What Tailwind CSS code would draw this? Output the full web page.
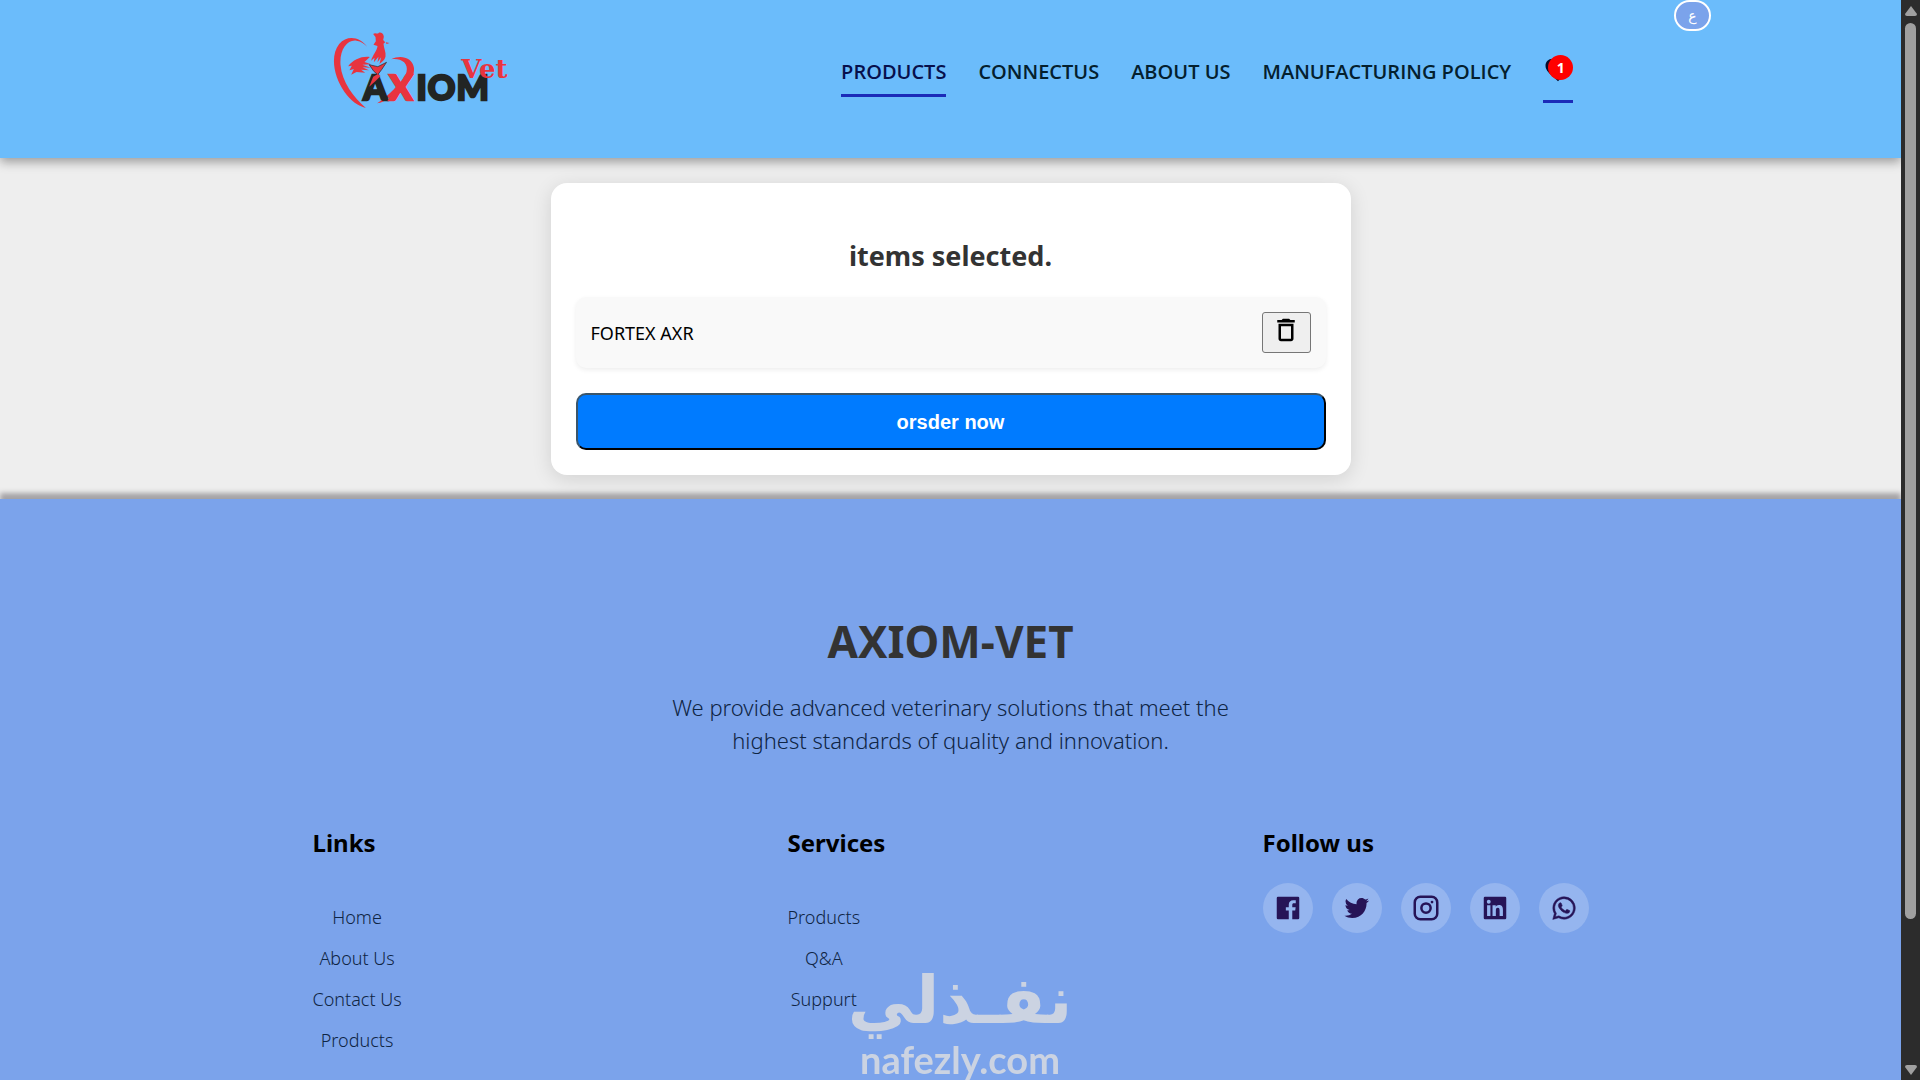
<!DOCTYPE html>
<html lang="en">
<head>
  <meta charset="UTF-8" />
  <meta name="viewport" content="width=device-width, initial-scale=1.0" />
  <title>AXIOM-VET</title>
  <script src="https://cdn.jsdelivr.net/npm/@tailwindcss/browser@4"></script>
</head>
<body class="bg-[#eeeeee] font-['Noto_Sans',sans-serif] text-black min-h-screen flex flex-col pr-[19px]">

  <!-- header -->
  <header class="relative z-10 h-[158px] bg-[#6bbcfb] shadow-[0_4px_10px_rgba(0,0,0,0.35)]">
    <div class="w-2/3 mx-auto pt-[30px] pl-4 pr-[11px] flex items-start justify-between">
      <a href="#" aria-label="Axiom Vet home">
        <svg class="w-[177px] h-[80px]" viewBox="70 30 530 240">
          <g fill="#e8343f">
            <path d="M172 80C150 50 112 44 88 72C60 108 72 170 104 216C122 242 144 258 168 264C132 232 96 186 92 134C89 88 112 58 140 62C154 64 164 72 172 80Z" />
            <path d="M244 118C272 104 306 112 312 142C318 176 282 196 262 212C244 228 226 246 202 250C232 230 282 184 290 156C297 128 272 114 244 118Z" />
            <path d="M190 42C197 36 202 44 207 38C213 36 221 40 222 50L220 60L226 67L221 71C222 84 229 96 227 110C224 121 216 126 209 132L214 112L203 127L206 110L192 127L194 113L184 122C188 105 202 92 203 78L191 74L198 64L197 51Z" />
            <path d="M228 67L239 69L230 72Z" />
            <path d="M180 111C156 108 130 118 115 139L126 137L119 151L132 147L124 164L140 156L166 158L154 149L177 151L158 142L182 143L158 134L184 133L164 126Z" />
          </g>
          <g font-family="Lato, sans-serif" font-weight="900" font-size="102" fill="#222524" stroke="#222524" stroke-width="7">
            <text x="160" y="240">A</text>
            <text x="238" y="240" fill="#e8343f" stroke="#e8343f">X</text>
            <text x="320" y="240">I</text>
            <text x="354" y="240">O</text>
            <text x="440" y="240">M</text>
          </g>
          <path d="M178 134L204 140L230 127L216 148L204 164L192 154Z" fill="#e8343f" stroke="#222" stroke-width="2" />
          <path d="M178 200L190 170L204 162L212 168L198 182Z" fill="#e8343f" />
          <text x="454" y="174" font-family="'DejaVu Serif', serif" font-weight="700" font-size="78" fill="#e8343f">Vet</text>
        </svg>
      </a>
      <nav class="flex items-start gap-8 pt-[25px] font-['Open_Sans',sans-serif] font-semibold text-xl leading-[34px] text-[#04202e]">
        <a href="#" class="border-b-3 border-[#1c2bb8] pb-[5px] text-[#07104c]">PRODUCTS</a>
        <a href="#">CONNECTUS</a>
        <a href="#">ABOUT US</a>
        <a href="#">MANUFACTURING POLICY</a>
        <a href="#" aria-label="Favourites" class="relative w-[30px] h-12 border-b-3 border-[#1c2bb8]">
          <svg class="w-[30px] h-[30px]" viewBox="0 0 24 24" fill="#080b2b"><path d="M12 21 10.550 19.500C5.400 14.900 2 12.300 2 8.500 2 5.400 4.400 3 7.500 3c1.700 0 3.400.8 4.500 2.100C13.100 3.800 14.800 3 16.500 3 19.600 3 22 5.400 22 8.500c0 3.800-3.400 6.400-8.600 11z" /></svg>
          <span class="absolute right-0 top-0 w-[25px] h-[25px] rounded-full bg-[#ff0000] text-white text-sm font-bold leading-[25px] text-center">1</span>
        </a>
      </nav>
    </div>
    <button type="button" class="absolute top-0 right-[10%] w-[37px] h-[31px] rounded-full border-2 border-white bg-[#7ba3eb] text-white font-['DejaVu_Sans',sans-serif] text-sm">ع</button>
  </header>

  <!-- selected items -->
  <main class="px-4 py-[25px] pb-6">
    <section class="max-w-[800px] mx-auto bg-white rounded-2xl p-[25px] pt-[52px] shadow-[0_4px_20px_rgba(0,0,0,0.12)]">
      <h1 class="text-[27px] leading-[42px] font-bold text-[#333] text-center">items selected.</h1>
      <ul class="mt-5">
        <li class="flex items-center justify-between rounded-[10px] bg-[#f9f9f9] p-[15px] shadow-[0_2px_5px_rgba(0,0,0,0.07)]">
          <span class="text-lg">FORTEX AXR</span>
          <button type="button" aria-label="Remove FORTEX AXR" class="w-[49px] h-[41px] flex justify-center pt-[2px] border border-[#767676] rounded-[3px] bg-[#efefef]">
            <svg class="w-[30px] h-[30px]" viewBox="0 0 24 24"><path d="M6 19c0 1.100.9 2 2 2h8c1.100 0 2-.9 2-2V7H6v12zM8 9h8v10H8V9zm7.500-5-1-1h-5l-1 1H5v2h14V4z" /></svg>
          </button>
        </li>
      </ul>
      <button type="button" class="mt-[25px] w-full h-[57px] rounded-[10px] border-2 border-t-[#3b566b] border-l-[#3b566b] border-r-black border-b-black bg-[#007bff] text-white font-['Liberation_Sans',sans-serif] font-bold text-xl">orsder now</button>
    </section>
  </main>

  <!-- footer -->
  <footer class="flex-1 bg-[#7ba3eb] pt-[106px] shadow-[0_-6px_5px_#a5a3a6]">
    <div class="text-center">
      <h2 class="text-[44px] leading-[72px] font-bold text-[#333]">AXIOM-VET</h2>
      <p class="max-w-[600px] mx-auto mt-[14px] text-[22px] leading-[33px] font-light text-[#0f2544]">We provide advanced veterinary solutions that meet the highest standards of quality and innovation.</p>
    </div>
    <div class="w-fit mx-auto mt-[66px] grid grid-cols-3 gap-[149px]">
      <section>
        <h3 class="text-2xl leading-[40px] font-bold">Links</h3>
        <ul class="mt-[34px] w-fit text-center text-lg leading-[41px] font-light text-[#0f2544]">
          <li><a href="#">Home</a></li>
          <li><a href="#">About Us</a></li>
          <li><a href="#">Contact Us</a></li>
          <li><a href="#">Products</a></li>
        </ul>
      </section>
      <section>
        <h3 class="text-2xl leading-[40px] font-bold">Services</h3>
        <ul class="mt-[34px] w-fit text-center text-lg leading-[41px] font-light text-[#0f2544]">
          <li><a href="#">Products</a></li>
          <li><a href="#">Q&amp;A</a></li>
          <li><a href="#">Suppurt</a></li>
        </ul>
      </section>
      <section>
        <h3 class="text-2xl leading-[40px] font-bold">Follow us</h3>
        <div class="mt-5 flex gap-[19px] text-[#261457]">
          <a href="#" aria-label="Facebook" class="w-[50px] h-[50px] rounded-full bg-white/20 flex items-center justify-center">
            <svg class="w-[30px] h-[30px]" viewBox="0 0 24 24" fill="currentColor"><path d="M20 3H4a1 1 0 0 0-1 1v16a1 1 0 0 0 1 1h8.615v-6.960h-2.338v-2.725h2.338v-2c0-2.325 1.420-3.592 3.500-3.592.699-.002 1.399.034 2.095.107v2.420h-1.435c-1.128 0-1.348.538-1.348 1.325v1.735h2.697l-.35 2.725h-2.348V21H20a1 1 0 0 0 1-1V4a1 1 0 0 0-1-1z" /></svg>
          </a>
          <a href="#" aria-label="Twitter" class="w-[50px] h-[50px] rounded-full bg-white/20 flex items-center justify-center">
            <svg class="w-[30px] h-[30px]" viewBox="0 0 24 24" fill="currentColor"><path d="M19.633 7.997c.013.175.013.349.013.523 0 5.325-4.053 11.461-11.460 11.461-2.282 0-4.402-.661-6.186-1.809.324.037.636.05.973.05a8.070 8.070 0 0 0 5.001-1.721 4.036 4.036 0 0 1-3.767-2.793c.249.037.499.062.761.062.361 0 .724-.05 1.061-.137a4.027 4.027 0 0 1-3.230-3.953v-.05c.537.299 1.160.486 1.820.511a4.022 4.022 0 0 1-1.796-3.354c0-.748.199-1.434.548-2.032a11.457 11.457 0 0 0 8.306 4.215c-.062-.3-.1-.611-.1-.923a4.026 4.026 0 0 1 4.028-4.028c1.160 0 2.207.486 2.943 1.272a7.957 7.957 0 0 0 2.556-.973 4.020 4.020 0 0 1-1.771 2.220 8.073 8.073 0 0 0 2.319-.624 8.645 8.645 0 0 1-2.019 2.083z" /></svg>
          </a>
          <a href="#" aria-label="Instagram" class="w-[50px] h-[50px] rounded-full bg-white/20 flex items-center justify-center">
            <svg class="w-[30px] h-[30px]" viewBox="0 0 24 24" fill="none" stroke="currentColor" stroke-width="2"><rect x="3" y="3" width="18" height="18" rx="4.500" /><circle cx="12" cy="12" r="3.700" /><circle cx="16.800" cy="7.200" r="1.100" fill="currentColor" stroke="none" /></svg>
          </a>
          <a href="#" aria-label="LinkedIn" class="w-[50px] h-[50px] rounded-full bg-white/20 flex items-center justify-center">
            <svg class="w-[30px] h-[30px]" viewBox="0 0 24 24" fill="currentColor"><path d="M20 3H4a1 1 0 0 0-1 1v16a1 1 0 0 0 1 1h16a1 1 0 0 0 1-1V4a1 1 0 0 0-1-1zM8.339 18.337H5.667v-8.590h2.672v8.590zM7.003 8.574a1.548 1.548 0 1 1 0-3.096 1.548 1.548 0 0 1 0 3.096zm11.335 9.763h-2.669V14.160c0-.996-.018-2.277-1.388-2.277-1.390 0-1.601 1.086-1.601 2.207v4.248h-2.667v-8.590h2.560v1.174h.037c.355-.675 1.227-1.387 2.524-1.387 2.704 0 3.203 1.778 3.203 4.092v4.710z" /></svg>
          </a>
          <a href="#" aria-label="WhatsApp" class="w-[50px] h-[50px] rounded-full bg-white/20 flex items-center justify-center">
            <svg class="w-[30px] h-[30px]" viewBox="0 0 24 24" fill="currentColor" stroke="currentColor" stroke-width="0.400"><path d="M18.403 5.633A8.919 8.919 0 0 0 12.053 3c-4.948 0-8.976 4.027-8.978 8.977 0 1.582.413 3.126 1.198 4.488L3 21.116l4.759-1.249a8.981 8.981 0 0 0 4.290 1.093h.004c4.947 0 8.975-4.027 8.977-8.977a8.926 8.926 0 0 0-2.627-6.350m-6.350 13.812h-.003a7.446 7.446 0 0 1-3.798-1.041l-.272-.162-2.824.741.753-2.753-.177-.282a7.448 7.448 0 0 1-1.141-3.971c.002-4.114 3.349-7.461 7.465-7.461a7.413 7.413 0 0 1 5.275 2.188 7.420 7.420 0 0 1 2.183 5.279c-.002 4.114-3.349 7.462-7.461 7.462m4.093-5.589c-.225-.113-1.327-.655-1.533-.73-.205-.075-.354-.112-.504.112s-.58.729-.711.879-.262.168-.486.056-.947-.349-1.804-1.113c-.667-.595-1.117-1.329-1.248-1.554s-.014-.346.099-.458c.101-.1.224-.262.336-.393.112-.131.149-.224.224-.374s.038-.281-.019-.393c-.056-.113-.505-1.217-.692-1.666-.181-.435-.366-.377-.504-.383a9.650 9.650 0 0 0-.429-.008.826.826 0 0 0-.599.28c-.206.225-.785.767-.785 1.871s.804 2.171.916 2.321c.112.15 1.582 2.415 3.832 3.387.536.231.954.369 1.279.473.537.171 1.026.146 1.413.089.431-.064 1.327-.542 1.514-1.066.187-.524.187-.973.131-1.067-.056-.094-.207-.151-.43-.263" /></svg>
          </a>
        </div>
      </section>
    </div>
  </footer>

  <!-- watermark -->
  <div class="fixed bottom-0 left-1/2 -translate-x-1/2 z-20 flex flex-col items-center text-[#cbd3e2] pointer-events-none">
    <span lang="ar" dir="rtl" class="font-['DejaVu_Sans',sans-serif] font-bold text-[66px] leading-[74px]">نفـذلي</span>
    <span class="font-[Lato,sans-serif] font-bold text-[38px] leading-[42px]">nafezly.com</span>
  </div>

  <!-- scrollbar -->
  <div class="fixed inset-y-0 right-0 z-30 w-[19px] bg-[#2c2c2c] flex flex-col items-center pt-[6px] pb-[5px]">
    <svg class="w-3 h-[10px]" viewBox="0 0 12 10" fill="#a0a0a0"><path d="M6 0 12 8Q12 10 10 10H2Q0 10 0 8Z" /></svg>
    <div class="flex-1 w-full pt-[7px] flex justify-center"><div class="w-[11px] h-[86%] rounded-full bg-[#a0a0a0]"></div></div>
    <svg class="w-3 h-[10px]" viewBox="0 0 12 10" fill="#a0a0a0"><path d="M6 10 12 2Q12 0 10 0H2Q0 0 0 2Z" /></svg>
  </div>

</body>
</html>
